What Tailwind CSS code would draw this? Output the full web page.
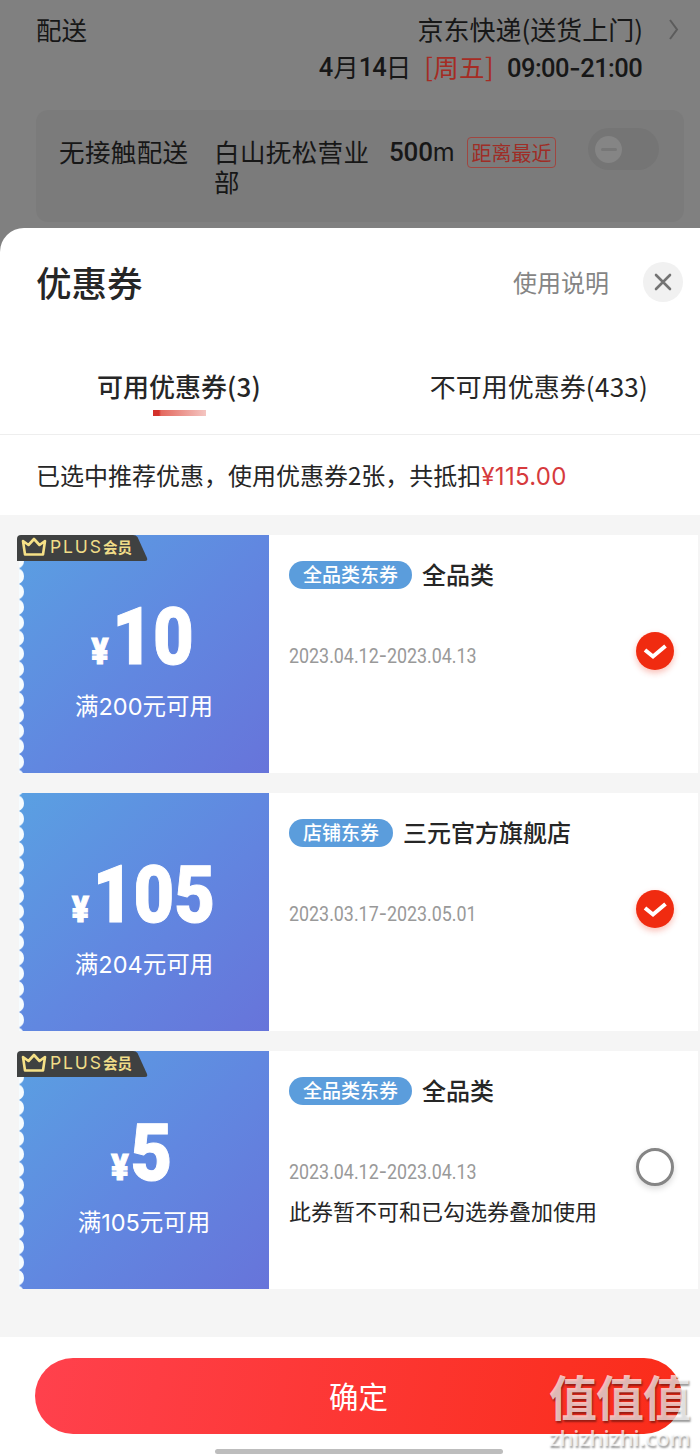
<!DOCTYPE html>
<html lang="zh-CN">
<head>
<meta charset="utf-8">
<title>优惠券</title>
<script src="https://cdn.jsdelivr.net/npm/@tailwindcss/browser@4"></script>
</head>
<body class="w-[700px] h-[1456px] overflow-hidden bg-[#808080] font-['Noto_Sans_CJK_SC',sans-serif] text-[#262626]">
<svg width="0" height="0" class="absolute">
  <defs>
    <pattern id="scallop" x="0" y="2.5" width="6" height="15.47" patternUnits="userSpaceOnUse">
      <path d="M0 0Q5 2.500 5 7.700T0 15.470Z" fill="#f6fcff"/>
    </pattern>
    <symbol id="crown" viewBox="0 0 26 20">
      <path d="M2 4L7.500 8L13 2L18.500 8L24 4L22 17.500H4Z" fill="none" stroke="#f6e187" stroke-width="2.6" stroke-linejoin="round"/>
    </symbol>
  </defs>
</svg>
<div class="relative flex flex-col h-full">
  <section class="h-[228px] shrink-0 text-[#171717] text-[25.5px]">
    <div class="flex justify-between pl-9 pr-[20px] h-[110px] pt-[11px]">
      <span class="leading-[36px]">配送</span>
      <div class="flex">
        <div class="flex flex-col items-end">
          <span class="leading-[36px] text-[26px]">京东快递(送货上门)</span>
          <div class="flex leading-[38px] whitespace-pre -mr-px"><span class="font-['Roboto'] font-medium leading-[41px] tracking-[-0.2px]">4</span>月<span class="font-['Roboto'] font-medium leading-[41px] tracking-[-1px]">14</span>日<span class="text-[#a52c24] ml-[13px] tracking-[0.4px]">[周五]</span><span class="font-['Roboto'] font-medium leading-[41px] ml-[13px] w-[137px] tracking-[-0.55px]">09:00<span class="font-['Inter']">-</span>21:00</span></div>
        </div>
        <svg class="ml-[25px] mt-[8px]" width="12" height="22" viewBox="0 0 12 22" fill="none" stroke="#5c5c5c" stroke-width="2"><path d="M2 1L9 10.500L2 20"/></svg>
      </div>
    </div>
    <div class="ml-9 w-[648px] h-[112px] rounded-[12px] bg-[#7b7b7b] flex pl-[23px] pt-[27px] leading-[30px]">
      <span class="w-[155px] -mt-px tracking-[0.4px]">无接触配送</span>
      <span class="w-[156px] -mt-px tracking-[0.4px]">白山抚松营业部</span>
      <span class="ml-[19px] w-[78px] font-['Roboto']"><span class="font-medium tracking-[-0.2px] text-[26px]">500</span><span class="font-['Inter'] text-[25px]">m</span></span>
      <span class="w-[89px] h-[31px] border border-[#a04640] rounded-[4px] text-[#9f2d26] text-[20px] leading-[29px] text-center whitespace-nowrap">距离最近</span>
      <span class="ml-[32px] -mt-[9px] w-[71px] h-[42px] rounded-full bg-[#757575] flex items-center pl-[7px]"><span class="size-[27px] rounded-full bg-[#858585] flex items-center justify-center"><span class="w-4 h-[3px] bg-[#777] rounded-full"></span></span></span>
    </div>
  </section>
  <main class="flex-1 bg-white rounded-tl-[24px] flex flex-col">
    <header class="h-[108px] flex items-center pl-9 pr-[17px]">
      <h1 class="text-[35.5px] font-medium leading-[48px] flex-1">优惠券</h1>
      <span class="text-[24px] text-[#858585] mr-[34px]">使用说明</span>
      <span class="size-10 rounded-full bg-[#f1f1f1] flex items-center justify-center"><svg width="18" height="18" viewBox="0 0 18 18" stroke="#747474" stroke-width="2.6" stroke-linecap="round"><path d="M2 2L16 16M16 2L2 16"/></svg></span>
    </header>
    <nav class="h-[99px] flex border-b border-[#eeeeee] text-[26px]">
      <div class="w-[358px] shrink-0 flex flex-col items-center"><span class="font-medium leading-[38px] mt-[31px]">可用优惠券<span class="tracking-[0.3px]">(3)</span></span><span class="mt-[5px] w-[53px] h-[6px] bg-[linear-gradient(90deg,#d3312b_0,#d3312b_6px,#e4695f_8px,#f4c6c2_53px)]"></span></div>
      <div class="w-[362px] shrink-0 text-center whitespace-nowrap"><span class="block leading-[38px] mt-[31px]">不可用优惠券<span class="tracking-[0.3px]">(433)</span></span></div>
    </nav>
    <p class="h-[80px] leading-[80px] pl-9 text-[24px] whitespace-nowrap">已选中推荐优惠，使用优惠券2张，共抵扣<span class="font-['Inter'] text-[#d63a3d] tracking-[0.3px]">¥115.00</span></p>
    <section class="bg-[#f5f5f5] h-[822px] pt-5 pl-[19px] pr-[2px] flex flex-col gap-5">
      <article class="relative h-[238px] flex">
        <div class="relative w-[250px] bg-[linear-gradient(135deg,#5aa0e2,#6187e0_52%,#6774da)] text-white flex flex-col items-center pt-[60px]">
          <svg class="absolute left-0 top-0" width="6" height="238"><rect width="6" height="238" fill="url(#scallop)"/></svg>
          <div class="font-['Roboto'] font-black flex items-baseline leading-[84px] h-[84px] -ml-[2px] scale-x-[0.89] [-webkit-text-stroke:1px_white]"><span class="text-[36px] mr-[4px]">¥</span><span class="text-[79px]">10</span></div>
          <span class="text-[23.5px] leading-[34px] mt-[9px]">满<span class="font-['Inter'] text-[23.5px]">200</span>元可用</span>
        </div>
        <div class="absolute -left-[2px] top-0 w-[131px] h-[26px]">
          <svg class="absolute inset-0" width="131" height="26"><path d="M4 0H116Q119 0 120.500 2L130 23Q131 26 128 26H0V4Q0 0 4 0Z" fill="#3f4141"/></svg>
          <div class="relative flex items-center h-[24px] pl-[4px] text-[#f0dc88] whitespace-nowrap"><svg width="26" height="20"><use href="#crown"/></svg><span class="ml-[3px] mt-px font-['Inter'] text-[17.500px] tracking-[1.9px]">PLUS</span><span class="text-[14.500px] font-bold">会员</span></div>
        </div>
        <div class="flex-1 bg-white flex pl-5 pr-[24px]">
          <div class="flex-1 pt-[25px]">
            <div class="flex items-center h-[30px]"><span class="h-[28px] w-[123px] rounded-full bg-[#5b9ddc] text-white text-[19px] font-medium leading-[26px] text-center">全品类东券</span><span class="ml-[10px] -mt-[2px] text-[24px] font-medium">全品类</span></div>
            <div class="mt-[51px] h-[30px] leading-[30px] font-['Roboto'] text-[21px] text-[#999] origin-left scale-x-[0.85] whitespace-nowrap">2023.04.12<span class="font-['Inter']">-</span>2023.04.13</div>
          </div>
          <span class="mt-[97px] size-[38px] rounded-full bg-[#f02b10] shadow-[0_3px_6px_rgba(240,43,16,0.3)] flex items-center justify-center"><svg width="24" height="18" viewBox="0 0 24 18" fill="none" stroke="#fff" stroke-width="4"><path d="M2 8L10 14.500L22.500 4"/></svg></span>
        </div>
      </article>
      <article class="relative h-[238px] flex">
        <div class="relative w-[250px] bg-[linear-gradient(135deg,#5aa0e2,#6187e0_52%,#6774da)] text-white flex flex-col items-center pt-[60px]">
          <svg class="absolute left-0 top-0" width="6" height="238"><rect width="6" height="238" fill="url(#scallop)"/></svg>
          <div class="font-['Roboto'] font-black flex items-baseline leading-[84px] h-[84px] -ml-[2px] scale-x-[0.89] [-webkit-text-stroke:1px_white]"><span class="text-[36px] mr-[4px]">¥</span><span class="text-[79px]">105</span></div>
          <span class="text-[23.5px] leading-[34px] mt-[9px]">满<span class="font-['Inter'] text-[23.5px]">204</span>元可用</span>
        </div>
        <div class="flex-1 bg-white flex pl-5 pr-[24px]">
          <div class="flex-1 pt-[25px]">
            <div class="flex items-center h-[30px]"><span class="h-[28px] w-[104px] rounded-full bg-[#5b9ddc] text-white text-[19px] font-medium leading-[26px] text-center">店铺东券</span><span class="ml-[10px] -mt-[2px] text-[24px] font-medium">三元官方旗舰店</span></div>
            <div class="mt-[51px] h-[30px] leading-[30px] font-['Roboto'] text-[21px] text-[#999] origin-left scale-x-[0.85] whitespace-nowrap">2023.03.17<span class="font-['Inter']">-</span>2023.05.01</div>
          </div>
          <span class="mt-[97px] size-[38px] rounded-full bg-[#f02b10] shadow-[0_3px_6px_rgba(240,43,16,0.3)] flex items-center justify-center"><svg width="24" height="18" viewBox="0 0 24 18" fill="none" stroke="#fff" stroke-width="4"><path d="M2 8L10 14.500L22.500 4"/></svg></span>
        </div>
      </article>
      <article class="relative h-[238px] flex">
        <div class="relative w-[250px] bg-[linear-gradient(135deg,#5aa0e2,#6187e0_52%,#6774da)] text-white flex flex-col items-center pt-[60px]">
          <svg class="absolute left-0 top-0" width="6" height="238"><rect width="6" height="238" fill="url(#scallop)"/></svg>
          <div class="font-['Roboto'] font-black flex items-baseline leading-[84px] h-[84px] -ml-[4px] scale-x-[0.91] [-webkit-text-stroke:1px_white]"><span class="text-[36px] mr-[2px]">¥</span><span class="text-[79px]">5</span></div>
          <span class="text-[23.5px] leading-[34px] mt-[9px]">满<span class="font-['Inter'] text-[23.5px]">105</span>元可用</span>
        </div>
        <div class="absolute -left-[2px] top-0 w-[131px] h-[26px]">
          <svg class="absolute inset-0" width="131" height="26"><path d="M4 0H116Q119 0 120.500 2L130 23Q131 26 128 26H0V4Q0 0 4 0Z" fill="#3f4141"/></svg>
          <div class="relative flex items-center h-[24px] pl-[4px] text-[#f0dc88] whitespace-nowrap"><svg width="26" height="20"><use href="#crown"/></svg><span class="ml-[3px] mt-px font-['Inter'] text-[17.500px] tracking-[1.9px]">PLUS</span><span class="text-[14.500px] font-bold">会员</span></div>
        </div>
        <div class="flex-1 bg-white flex pl-5 pr-[24px]">
          <div class="flex-1 pt-[25px]">
            <div class="flex items-center h-[30px]"><span class="h-[28px] w-[123px] rounded-full bg-[#5b9ddc] text-white text-[19px] font-medium leading-[26px] text-center">全品类东券</span><span class="ml-[10px] -mt-[2px] text-[24px] font-medium">全品类</span></div>
            <div class="mt-[51px] h-[30px] leading-[30px] font-['Roboto'] text-[21px] text-[#999] origin-left scale-x-[0.85] whitespace-nowrap">2023.04.12<span class="font-['Inter']">-</span>2023.04.13</div>
            <div class="mt-[7px] leading-[32px] text-[22px] whitespace-nowrap">此券暂不可和已勾选券叠加使用</div>
          </div>
          <span class="mt-[97px] size-[38px] rounded-full bg-white border-[3px] border-[#858585] shadow-[0_3px_6px_rgba(0,0,0,0.15)]"></span>
        </div>
      </article>
    </section>
    <footer class="pt-[21px] flex flex-col flex-1">
      <button class="ml-[35px] w-[647px] h-[76px] rounded-full bg-[linear-gradient(100deg,#ff414d,#fa2c19)] text-white text-[29.5px] pb-[2px] shrink-0">确定</button>
      <span class="ml-[215px] mt-[15px] w-[288px] h-[5px] rounded-full bg-[#bdbdbd]"></span>
    </footer>
  </main>
  <div class="absolute left-[549px] top-[1365px] flex flex-col text-white/70 [text-shadow:1px_2px_2px_rgba(0,0,0,0.4)] whitespace-nowrap">
    <span class="text-[48px] font-bold leading-[60px] tracking-[-1px]">值值值</span>
    <span class="font-['Open_Sans'] font-semibold text-[22px] leading-[22px] mt-px tracking-[-0.15px]">zhizhizhi.com</span>
  </div>
</div>
</body>
</html>
